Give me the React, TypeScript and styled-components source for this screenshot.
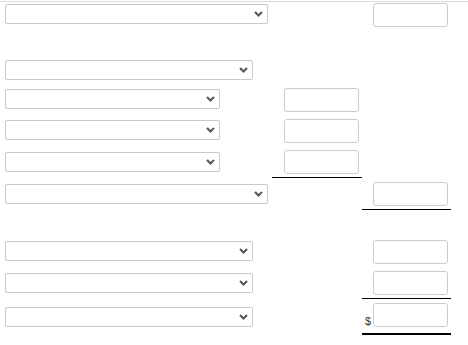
import React from 'react'
import styled, { createGlobalStyle } from 'styled-components'

type Line = 'none' | 'single' | 'total'

type RowType = {
  gap: number
  selectWidth: number
  selectOffset: number
  middle?: boolean
  middleLine?: Line
  right?: boolean
  rightLine?: Line
  dollar?: boolean
}

const rows: RowType[] = [
  { gap: 1, selectWidth: 263, selectOffset: 1, right: true },
  { gap: 33, selectWidth: 248, selectOffset: 0 },
  { gap: 8, selectWidth: 215, selectOffset: 1, middle: true },
  { gap: 7, selectWidth: 215, selectOffset: 1, middle: true },
  { gap: 7, selectWidth: 215, selectOffset: 2, middle: true, middleLine: 'single' },
  { gap: 4, selectWidth: 263, selectOffset: 2, right: true, rightLine: 'single' },
  { gap: 30, selectWidth: 248, selectOffset: 1, right: true },
  { gap: 7, selectWidth: 248, selectOffset: 2, right: true, rightLine: 'single' },
  { gap: 4, selectWidth: 248, selectOffset: 4, right: true, rightLine: 'total', dollar: true },
]

const Chevron = () => (
  <svg width="9" height="6" viewBox="0 0 9 6">
    <path d="M1 1 L4.5 4.5 L8 1" fill="none" stroke="#555" strokeWidth="2" />
  </svg>
)

export default function App() {
  return (
    <>
      <GlobalStyle />
      <TopRule />
      <Sheet>
        {rows.map((row, i) => (
          <Row key={i} $gap={row.gap}>
            <SelectCell $offset={row.selectOffset}>
              <SelectBox $width={row.selectWidth}>
                <Chevron />
              </SelectBox>
            </SelectCell>
            <AmountCell $line={row.middleLine || 'none'}>
              {row.middle && <AmountInput />}
            </AmountCell>
            <AmountCell $line={row.rightLine || 'none'}>
              {row.dollar && <Dollar>$</Dollar>}
              {row.right && <AmountInput />}
            </AmountCell>
          </Row>
        ))}
      </Sheet>
    </>
  )
}

const GlobalStyle = createGlobalStyle`
  body {
    margin: 0;
    background: #fff;
    font-family: "Liberation Sans", Arial, sans-serif;
  }
`

const TopRule = styled.div`
  height: 1px;
  margin-top: 1px;
  background: #dadada;
`

const Sheet = styled.div`
  padding-left: 5px;
`

const Row = styled.div<{ $gap: number }>`
  display: grid;
  grid-template-columns: 267px 90px 89px;
  align-items: start;
  margin-top: ${(p) => p.$gap}px;
`

const SelectCell = styled.div<{ $offset: number }>`
  padding-top: ${(p) => p.$offset}px;
`

const SelectBox = styled.div<{ $width: number }>`
  box-sizing: border-box;
  width: ${(p) => p.$width}px;
  height: 20px;
  border: 1px solid #c8c8c8;
  border-radius: 2px;
  background: #fff;
  display: flex;
  align-items: center;
  justify-content: flex-end;
  padding-right: 4px;
`

const AmountCell = styled.div<{ $line: Line }>`
  display: flex;
  justify-content: flex-end;
  align-items: flex-end;
  padding-right: 3px;
  padding-bottom: ${(p) => (p.$line === 'total' ? 6 : p.$line === 'single' ? 3 : 0)}px;
  border-bottom: ${(p) =>
    p.$line === 'total' ? '2px solid #000' : p.$line === 'single' ? '1px solid #000' : 'none'};
`

const AmountInput = styled.div`
  box-sizing: border-box;
  width: 75px;
  height: 24px;
  border: 1px solid #cbcbcb;
  border-radius: 3px;
  background: #fff;
`

const Dollar = styled.span`
  font-size: 11px;
  line-height: 11px;
  color: #333;
  margin-right: 2px;
`
